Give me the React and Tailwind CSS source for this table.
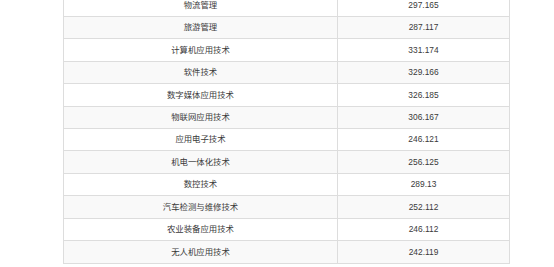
import React from "react";

const rows = [
  ["物流管理", "297.165"],
  ["旅游管理", "287.117"],
  ["计算机应用技术", "331.174"],
  ["软件技术", "329.166"],
  ["数字媒体应用技术", "326.185"],
  ["物联网应用技术", "306.167"],
  ["应用电子技术", "246.121"],
  ["机电一体化技术", "256.125"],
  ["数控技术", "289.13"],
  ["汽车检测与维修技术", "252.112"],
  ["农业装备应用技术", "246.112"],
  ["无人机应用技术", "242.119"],
];

export default function App() {
  return (
    <div className="w-[554px] h-[267px] overflow-hidden bg-white">
      <div className="ml-[63px] w-[447px] -mt-[6.4px] border border-[#dddddd] text-[8.4px] text-[#3a3a3a] [font-family:'Liberation_Sans','Noto_Sans_CJK_SC',sans-serif]">
        {rows.map(([name, score], i) => (
          <div
            key={name}
            className={`flex h-[22.4px] border-b border-[#dddddd] last:border-b-0 ${i % 2 === 1 ? "bg-[#f9f9f9]" : "bg-white"}`}
          >
            <div className="w-[274px] border-r border-[#dddddd] flex items-center justify-center">
              {name}
            </div>
            <div className="flex-1 flex items-center justify-center">{score}</div>
          </div>
        ))}
      </div>
    </div>
  );
}
